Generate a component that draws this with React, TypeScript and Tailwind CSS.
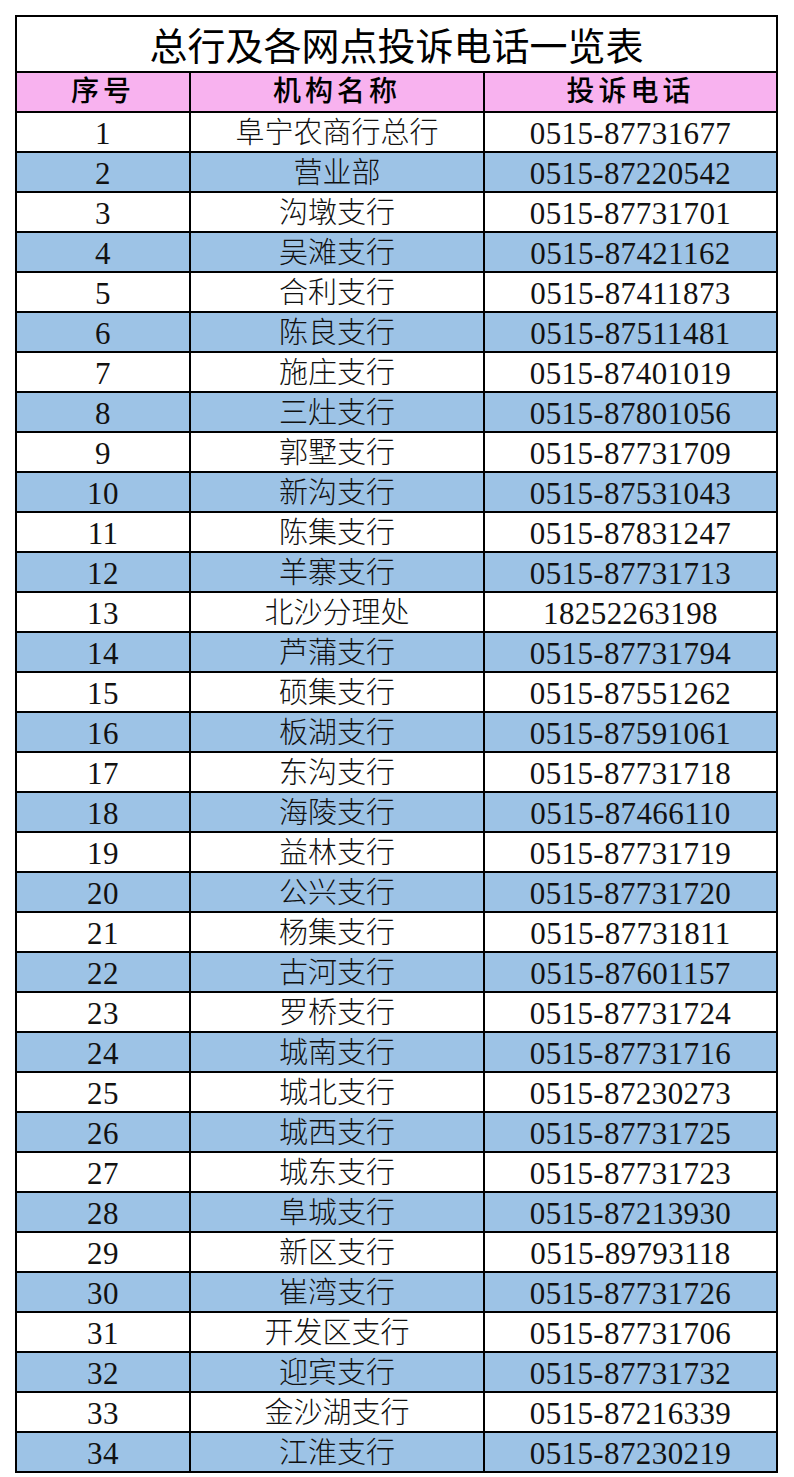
const rows: [string, string][] = [
  ["阜宁农商行总行", "0515-87731677"],
  ["营业部", "0515-87220542"],
  ["沟墩支行", "0515-87731701"],
  ["吴滩支行", "0515-87421162"],
  ["合利支行", "0515-87411873"],
  ["陈良支行", "0515-87511481"],
  ["施庄支行", "0515-87401019"],
  ["三灶支行", "0515-87801056"],
  ["郭墅支行", "0515-87731709"],
  ["新沟支行", "0515-87531043"],
  ["陈集支行", "0515-87831247"],
  ["羊寨支行", "0515-87731713"],
  ["北沙分理处", "18252263198"],
  ["芦蒲支行", "0515-87731794"],
  ["硕集支行", "0515-87551262"],
  ["板湖支行", "0515-87591061"],
  ["东沟支行", "0515-87731718"],
  ["海陵支行", "0515-87466110"],
  ["益林支行", "0515-87731719"],
  ["公兴支行", "0515-87731720"],
  ["杨集支行", "0515-87731811"],
  ["古河支行", "0515-87601157"],
  ["罗桥支行", "0515-87731724"],
  ["城南支行", "0515-87731716"],
  ["城北支行", "0515-87230273"],
  ["城西支行", "0515-87731725"],
  ["城东支行", "0515-87731723"],
  ["阜城支行", "0515-87213930"],
  ["新区支行", "0515-89793118"],
  ["崔湾支行", "0515-87731726"],
  ["开发区支行", "0515-87731706"],
  ["迎宾支行", "0515-87731732"],
  ["金沙湖支行", "0515-87216339"],
  ["江淮支行", "0515-87230219"],
];

const serif = "font-['Liberation_Serif','Noto_Sans_CJK_SC',serif]";

export default function App() {
  return (
    <div className="min-h-screen bg-white pt-[15px] pl-[15px]">
      <div className="w-[763px] border-2 border-black text-black">
        {/* Title */}
        <div className="flex h-[54px] items-center justify-center font-['Noto_Sans_CJK_SC',sans-serif] text-[38px] leading-none">
          总行及各网点投诉电话一览表
        </div>

        {/* Header */}
        <div
          className={`flex h-[40px] border-t-2 border-black bg-[#f8b2ef] ${serif} text-[28px] font-medium leading-none`}
        >
          <div className="flex w-[172px] items-center justify-center tracking-[4px]">序号</div>
          <div className="flex w-[294px] items-center justify-center border-l-2 border-black tracking-[4px]">
            机构名称
          </div>
          <div className="flex flex-1 items-center justify-center border-l-2 border-black tracking-[4px]">
            投诉电话
          </div>
        </div>

        {/* Rows */}
        {rows.map(([name, phone], i) => (
          <div
            key={i}
            className={`flex h-[40px] border-t-2 border-black ${serif} leading-none text-[#111] ${
              i % 2 === 1 ? "bg-[#9dc3e6]" : "bg-white"
            }`}
          >
            <div className="flex w-[172px] items-center justify-center pt-[3px] text-[31px] tracking-[0.4px]">
              {i + 1}
            </div>
            <div className="flex w-[294px] items-center justify-center border-l-2 border-black pt-[2px] text-[29px] font-light">
              {name}
            </div>
            <div className="flex flex-1 items-center justify-center border-l-2 border-black pt-[3px] text-[31px] tracking-[0.4px]">
              {phone}
            </div>
          </div>
        ))}
      </div>
    </div>
  );
}
